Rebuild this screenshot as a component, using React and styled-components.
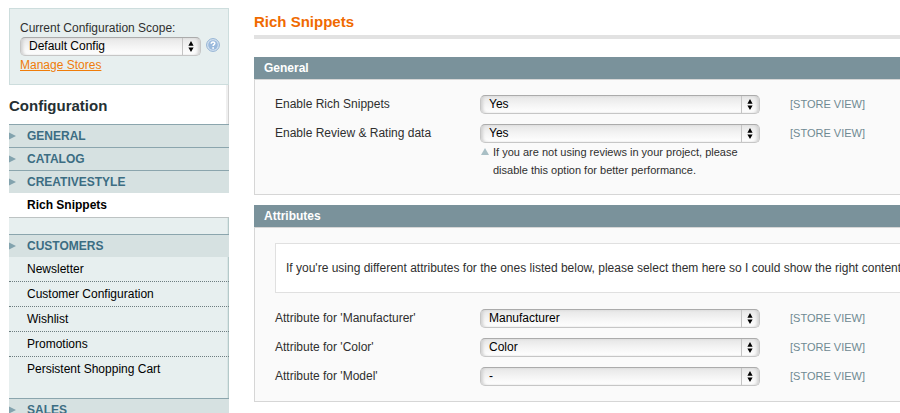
import React, { useState } from 'react';
import styled, { createGlobalStyle } from 'styled-components';

const menu = [
    { title: 'General', items: [] },
    { title: 'Catalog', items: [] },
    { title: 'Creativestyle', items: ['Rich Snippets'] },
    {
        title: 'Customers',
        items: ['Newsletter', 'Customer Configuration', 'Wishlist', 'Promotions', 'Persistent Shopping Cart'],
    },
    { title: 'Sales', items: [] },
];

const generalFields = [
    { id: 'enable', label: 'Enable Rich Snippets', options: ['Yes', 'No'] },
    {
        id: 'reviews',
        label: 'Enable Review & Rating data',
        options: ['Yes', 'No'],
        hint: 'If you are not using reviews in your project, please disable this option for better performance.',
    },
];

const attributeFields = [
    { id: 'manufacturer', label: "Attribute for 'Manufacturer'", options: ['Manufacturer', 'Color', '-'] },
    { id: 'color', label: "Attribute for 'Color'", options: ['Color', 'Manufacturer', '-'] },
    { id: 'model', label: "Attribute for 'Model'", options: ['-', 'Manufacturer', 'Color'] },
];

function Select({ id, options }) {
    const [value, setValue] = useState(options[0]);

    return (
        <SelectBox>
            <select id={id} value={value} onChange={(e) => setValue(e.target.value)}>
                {options.map((option) => (
                    <option key={option}>{option}</option>
                ))}
            </select>
            <svg width="18" height="17" viewBox="0 0 18 17" aria-hidden="true">
                <path d="M0.5 0V17" stroke="#c4c4c4" />
                <path d="M9 3L11.6 7.8H6.4zM9 14L11.6 9.4H6.4z" fill="#000" />
            </svg>
        </SelectBox>
    );
}

function HelpIcon() {
    return (
        <svg width="14" height="14" viewBox="0 0 14 14" aria-hidden="true">
            <circle cx="7" cy="7" r="6.4" fill="#d5e3f1" stroke="#93b2d3" />
            <circle cx="7" cy="7" r="4.8" fill="#9bbadd" />
            <path d="M5.2 5.7C5.2 3.4 8.9 3.5 8.8 5.5C8.7 6.7 7.1 6.7 7.1 8.1" fill="none" stroke="#fff" strokeWidth="1.5" />
            <circle cx="7.1" cy="10" r="0.9" fill="#fff" />
        </svg>
    );
}

function Fields({ fields }) {
    return (
        <FieldList>
            {fields.map((field) => (
                <FieldRow key={field.id}>
                    <label htmlFor={field.id}>{field.label}</label>
                    <div>
                        <Select id={field.id} options={field.options} />
                        {field.hint && (
                            <Hint>
                                <svg width="8" height="7" viewBox="0 0 8 7" aria-hidden="true">
                                    <path d="M4 0L8 7H0z" fill="#a9bfc5" />
                                </svg>
                                <p>{field.hint}</p>
                            </Hint>
                        )}
                    </div>
                    <StoreView>[STORE VIEW]</StoreView>
                </FieldRow>
            ))}
        </FieldList>
    );
}

function App() {
    return (
        <Page>
            <GlobalStyle />
            <Sidebar>
                <Scope>
                    <label htmlFor="scope">Current Configuration Scope:</label>
                    <div className="switcher">
                        <Select id="scope" options={['Default Config', 'Main Website']} />
                        <HelpButton type="button" aria-label="Help">
                            <HelpIcon />
                        </HelpButton>
                    </div>
                    <a href="#stores">Manage Stores</a>
                </Scope>
                <SidebarTitle>Configuration</SidebarTitle>
                <nav>
                    {menu.map((group) => (
                        <MenuGroup key={group.title}>
                            <MenuHeading type="button">
                                <svg width="7" height="8" viewBox="0 0 7 8" aria-hidden="true">
                                    <path d="M0 0.5L7 4L0 7.5z" fill="#83a3ae" />
                                </svg>
                                {group.title}
                            </MenuHeading>
                            {group.items.length > 0 && (
                                <MenuList>
                                    {group.items.map((item) => (
                                        <MenuItem key={item} $active={item === 'Rich Snippets'}>
                                            <a href="#section">{item}</a>
                                        </MenuItem>
                                    ))}
                                </MenuList>
                            )}
                        </MenuGroup>
                    ))}
                </nav>
            </Sidebar>
            <Main>
                <PageTitle>Rich Snippets</PageTitle>
                <Panel>
                    <h2>General</h2>
                    <PanelBody>
                        <Fields fields={generalFields} />
                    </PanelBody>
                </Panel>
                <Panel>
                    <h2>Attributes</h2>
                    <PanelBody>
                        <Note>
                            If you're using different attributes for the ones listed below, please select them here so I
                            could show the right content.
                        </Note>
                        <Fields fields={attributeFields} />
                    </PanelBody>
                </Panel>
            </Main>
        </Page>
    );
}

const GlobalStyle = createGlobalStyle`
    * {
        box-sizing: border-box;
    }

    body {
        margin: 0;
        overflow-x: hidden;
        background: #fff;
        color: #2f2f2f;
        font: 12px/18px "Liberation Sans", Arial, sans-serif;
    }

    h1, h2, p, ul {
        margin: 0;
        padding: 0;
    }

    svg {
        display: block;
        flex: none;
    }
`;

const Page = styled.div`
    display: flex;
    gap: 25px;
    min-width: 1000px;
    min-height: 100vh;
    padding: 8px 20px 0 9px;
`;

const Sidebar = styled.aside`
    flex: 0 0 220px;
    background: linear-gradient(to left, #d2d2d2 1px, #efefef 1px, #efefef 3px, #fff 3px);
`;

const Scope = styled.div`
    padding: 11px 8px 10px 10px;
    background: #e7efef;
    border: 1px solid #cddddd;

    label {
        display: block;
        line-height: 17px;
    }

    .switcher {
        display: flex;
        align-items: flex-start;
        gap: 5px;
    }

    a {
        color: #ef7c0a;
    }
`;

const SelectBox = styled.div`
    position: relative;
    flex: 1;

    select {
        display: block;
        width: 100%;
        height: 19px;
        padding: 0 24px 2px 8px;
        appearance: none;
        border: 1px solid #c6c6c6;
        border-top-color: #ababab;
        border-radius: 5px;
        background: linear-gradient(#e6e6e6, #f4f4f4 50%, #fff);
        box-shadow: inset 3px 0 3px -1px #d2d2d2, inset -3px 0 3px -1px #d2d2d2;
        color: #000;
        font: inherit;
        line-height: 16px;
    }

    svg {
        position: absolute;
        top: 1px;
        right: 1px;
        pointer-events: none;
    }
`;

const HelpButton = styled.button`
    padding: 1px 0;
    border: 0;
    background: none;
    cursor: pointer;
`;

const SidebarTitle = styled.h2`
    padding: 11px 0 9px;
    color: #253033;
    font-size: 15px;
    line-height: 19px;
`;

const MenuGroup = styled.div`
    border-top: 1px solid #8ba5ad;
`;

const MenuHeading = styled.button`
    display: flex;
    align-items: center;
    gap: 11px;
    width: 100%;
    height: 22px;
    padding: 0;
    border: 0;
    background: #d6e1e1;
    color: #3c6d83;
    font: bold 12px/22px "Liberation Sans", Arial, sans-serif;
    text-transform: uppercase;
    cursor: pointer;
`;

const MenuList = styled.ul`
    padding-bottom: 16px;
    list-style: none;
    background: linear-gradient(to left, #b4c9c9 1px, #d9e5e5 1px, #d9e5e5 2px, #e7efef 2px);
`;

const MenuItem = styled.li`
    border-bottom: 1px dotted #6d7d80;

    &:last-child {
        border-bottom-color: transparent;
    }

    a {
        display: block;
        padding: 3px 18px;
        color: #000;
        text-decoration: none;
    }

    ${(props) => props.$active && `
        && {
            border-bottom: 1px solid #bdc3c3;
            background: #fff;
            font-weight: bold;
        }
    `}
`;

const Main = styled.main`
    flex: 1;
    min-width: 0;
`;

const PageTitle = styled.h1`
    margin-bottom: 18px;
    padding: 4px 0;
    border-bottom: 4px solid #e2e2e2;
    color: #f06a00;
    font-size: 15px;
    line-height: 19px;
`;

const Panel = styled.section`
    margin-bottom: 10px;

    h2 {
        padding: 0 10px;
        background: #7a929b;
        color: #fff;
        font-size: 12px;
        line-height: 22px;
    }
`;

const PanelBody = styled.div`
    padding: 15px 20px;
    border: 1px solid #d6d6d6;
    background: #fafafa;
`;

const Note = styled.p`
    margin-bottom: 16px;
    padding: 15px 10px;
    border: 1px solid #e0e0e0;
    background: #fff;
    white-space: nowrap;
`;

const FieldList = styled.div`
    display: flex;
    flex-direction: column;
    gap: 10px;
`;

const FieldRow = styled.div`
    display: grid;
    grid-template-columns: 205px 280px 1fr;
    align-items: start;
    line-height: 19px;
`;

const Hint = styled.div`
    display: flex;
    gap: 4px;
    padding: 0 10px 0 1px;
    font-size: 11px;
    line-height: 18px;

    svg {
        margin-top: 5px;
    }
`;

const StoreView = styled.span`
    padding-left: 30px;
    color: #6f8992;
    font-size: 11px;
`;

export default App;
